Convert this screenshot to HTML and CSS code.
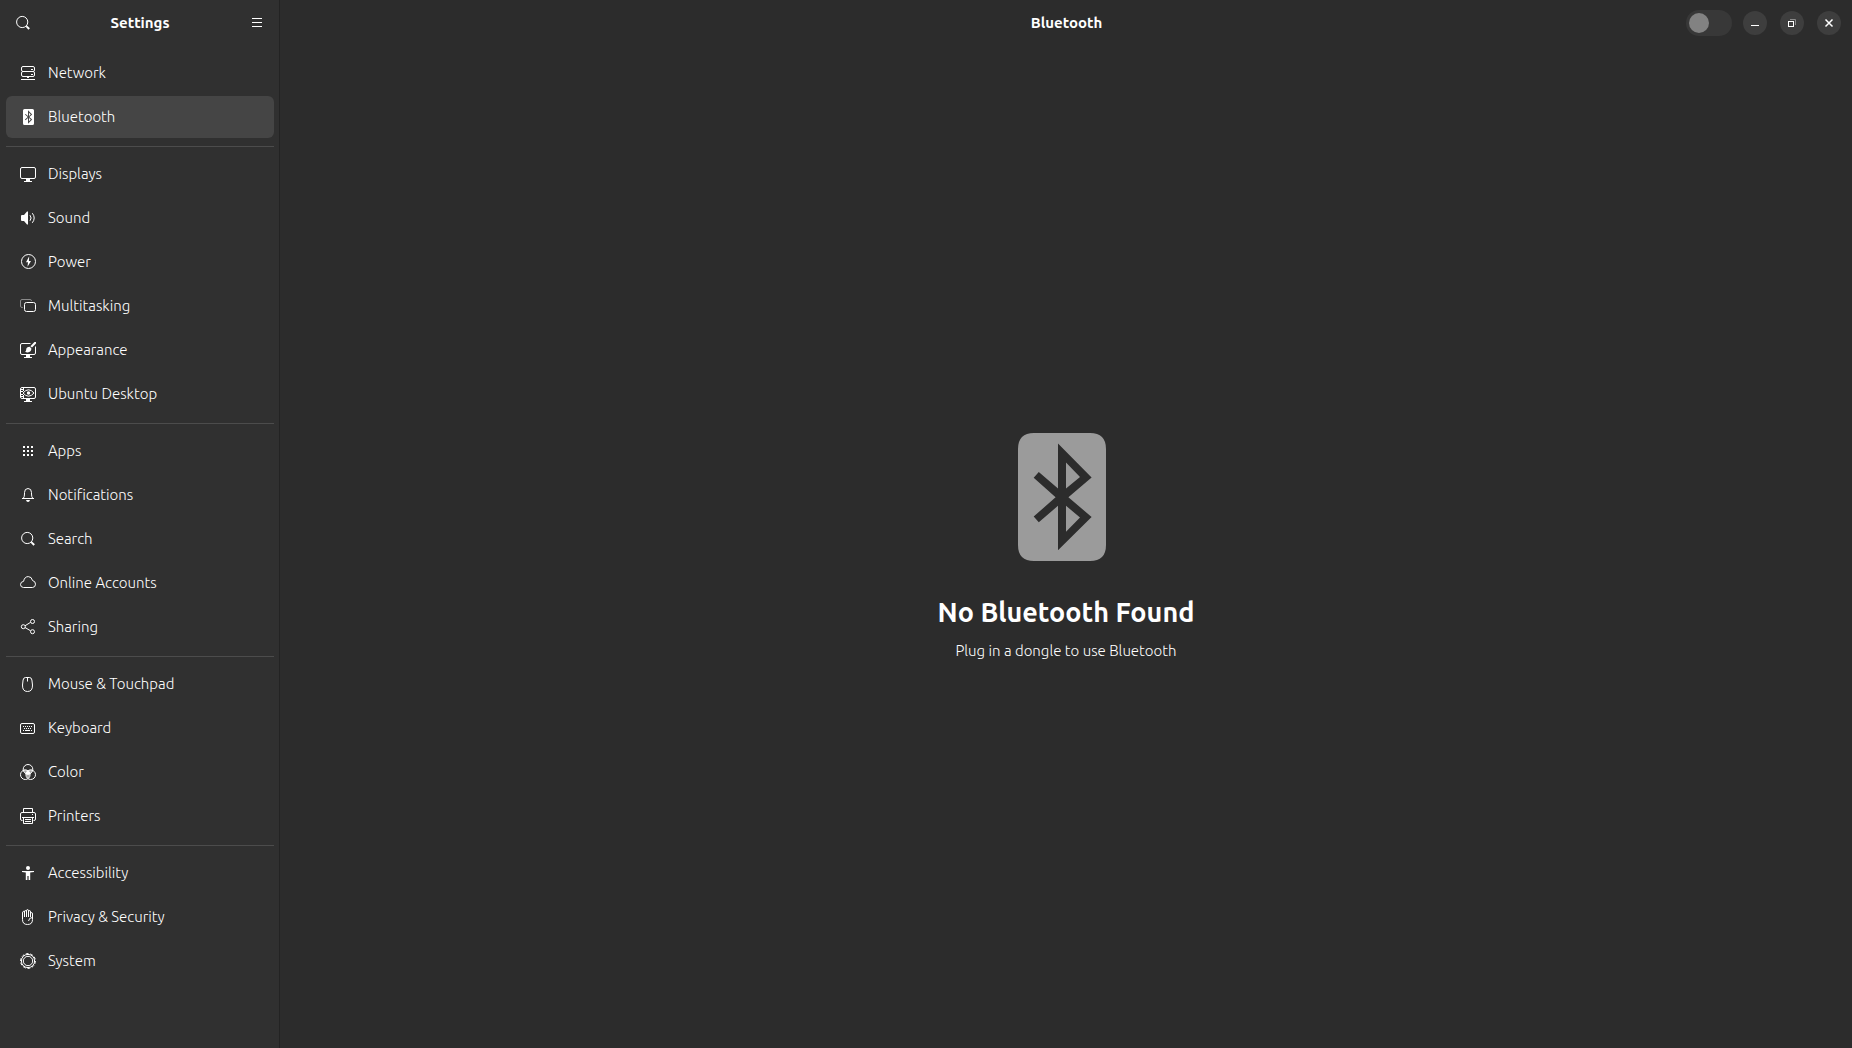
FILE: index.html
```html
<!DOCTYPE html>
<html lang="en">
<head>
<meta charset="utf-8">
<title>Settings</title>
<link rel="stylesheet" href="styles.css">
</head>
<body>
<div class="window">
  <aside class="sidebar">
    <header class="bar">
      <button class="flat" type="button" aria-label="Search settings">
        <svg class="icon" viewBox="0 0 16 16"><circle class="line" cx="7.2" cy="7" r="5.6"/><path class="line thick" d="M11.3 11.1 14.2 14"/></svg>
      </button>
      <h2 class="title">Settings</h2>
      <button class="flat" type="button" aria-label="Main menu">
        <svg class="icon" viewBox="0 0 16 16"><path d="M3 3h10v1H3zM3 7h10v1H3zM3 11h10v1H3z"/></svg>
      </button>
    </header>
    <nav class="panels" aria-label="Settings panels">
      <ul class="group">
        <li><a class="row" href="#network"><svg class="icon" viewBox="0 0 16 16"><rect class="line" x="1.5" y="1.5" width="13" height="5" rx="1.5"/><rect class="line" x="1.5" y="6.5" width="13" height="5" rx="1.5"/><path d="M11 4h2v1h-2zM11 9h2v1h-2zM7 12h2v1H7zM1 14h14v1H1z"/></svg>Network</a></li>
        <li><a class="row selected" href="#bluetooth" aria-current="page"><svg class="icon" viewBox="-1 0 16 16"><path fill-rule="evenodd" d="M3.5 0h8q1.500 0 1.500 1.500v13q0 1.500-1.500 1.500h-8Q2 16 2 14.500v-13Q2 0 3.500 0zM7 1.300V6.950L4.600 4.900 3.960 5.600 6.700 8.030 3.960 10.450 4.600 11.150 7 9.100v5.570L11.200 10.500 8.300 8.030 11.200 5.550zM8 3.700 9.750 5.500 8 6.950zM8 9.100 9.750 10.550 8 12.350z"/></svg>Bluetooth</a></li>
      </ul>
      <hr class="divider">
      <ul class="group">
        <li><a class="row" href="#displays"><svg class="icon" viewBox="0 0 16 16"><rect class="line" x=".5" y="1.5" width="15" height="11" rx="1.5"/><path d="M6 13h4v2h2v1H4v-1h2z"/></svg>Displays</a></li>
        <li><a class="row" href="#sound"><svg class="icon" viewBox="0 0 16 16"><path d="M2 5h2l3-3.400h1v12.800H7L4 11H2q-1 0-1-1V6q0-1 1-1z"/><path class="line" d="M10 5.200q2.200 2.800 0 5.600M12.300 3.200q3.800 4.800 0 9.600"/></svg>Sound</a></li>
        <li><a class="row" href="#power"><svg class="icon" viewBox="0 0 16 16"><circle class="line" cx="8.500" cy="7.500" r="7"/><path d="M9.200 2.300 6 8.300h2l-.5 4.400L11 6.900H8.900z"/></svg>Power</a></li>
        <li><a class="row" href="#multitasking"><svg class="icon" viewBox="0 0 16 16"><path class="line dim" d="M2.800 9.500H2Q.5 9.500.5 8V3Q.5 1.500 2 1.500h8q1.500 0 1.500 1.500"/><rect class="line" x="4.500" y="4.500" width="11" height="9" rx="2"/></svg>Multitasking</a></li>
        <li><a class="row" href="#appearance"><svg class="icon" viewBox="0 0 16 16"><path class="line" d="M10.500 1.500H2Q.5 1.500.5 3v8q0 1.500 1.500 1.500h12q1.500 0 1.500-1.500V4.500"/><path d="M6 13h4v2h2v1H4v-1h2zM16 0v1.500L12 5.600 10.400 4.200 14.200.2q.8-.6 1.800-.2zM9.700 4.800l1.700 1.600Q11.300 9.500 8.500 10.300q-1.800.4-3.300-.5 1-.6 1-2.200Q6.400 4.800 9.700 4.800z"/></svg>Appearance</a></li>
        <li><a class="row" href="#ubuntu"><svg class="icon" viewBox="0 0 16 16"><rect class="line" x=".5" y="1.500" width="15" height="11" rx="1.500"/><path d="M6 13h4v2h2v1H4v-1h2zM0 3h3v1H0zM0 5h3v1H0zM0 8h3v1H0zM0 10h3v1H0zM3 2h1v3H3zM3 9h1v3H3z"/><path class="line" d="M3 7q5.500-6.400 11 0-5.500 6.400-11 0z"/><circle cx="8.500" cy="7" r="1.700"/></svg>Ubuntu Desktop</a></li>
      </ul>
      <hr class="divider">
      <ul class="group">
        <li><a class="row" href="#apps"><svg class="icon" viewBox="0 0 16 16"><path d="M3 3h2v2H3zM7 3h2v2H7zM11 3h2v2h-2zM3 7h2v2H3zM7 7h2v2H7zM11 7h2v2h-2zM3 11h2v2H3zM7 11h2v2H7zM11 11h2v2h-2z"/></svg>Apps</a></li>
        <li><a class="row" href="#notifications"><svg class="icon" viewBox="0 0 16 16"><path class="line" d="M2 11.500h12M3.200 11.500Q4.500 10 4.500 7V5.500Q4.500 1.500 8 1.500t3.500 4V7q0 3 1.300 4.500"/><path d="M6 13h4q-.5 2-2 2t-2-2z"/></svg>Notifications</a></li>
        <li><a class="row" href="#search"><svg class="icon" viewBox="0 0 16 16"><circle class="line" cx="7.200" cy="7" r="5.600"/><path class="line thick" d="M11.300 11.100 14.200 14"/></svg>Search</a></li>
        <li><a class="row" href="#accounts"><svg class="icon" viewBox="0 0 16 16"><path class="line" d="M3.500 12.500Q.5 12.300.5 9.500.6 6.700 3.600 6.300 4.500 1.600 8.300 1.600q3.400 0 4.200 3.900 3 .7 3 3.700 0 3.100-3 3.300z"/></svg>Online Accounts</a></li>
        <li><a class="row" href="#sharing"><svg class="icon" viewBox="0 0 16 16"><path class="line" d="M5 6.800l5.600-3.500M5 8.500l5.600 3.300"/><circle class="line" cx="12.500" cy="2.500" r="2"/><circle class="line" cx="3.300" cy="7.700" r="2"/><circle class="line" cx="12.500" cy="12.700" r="2"/></svg>Sharing</a></li>
      </ul>
      <hr class="divider">
      <ul class="group">
        <li><a class="row" href="#mouse"><svg class="icon" viewBox="0 0 16 16"><path class="line" d="M5.500 1.500h4q2 0 2.400 2.500l.6 5q.2 6.500-5 6.500t-5-6.500l.6-5Q3.500 1.500 5.500 1.500zM7.500 1.500v4"/></svg>Mouse &amp; Touchpad</a></li>
        <li><a class="row" href="#keyboard"><svg class="icon" viewBox="0 0 16 16"><rect class="line" x=".5" y="3.500" width="14" height="10" rx="1.500"/><path d="M3 6h1v1H3zM5 6h1v1H5zM7 6h1v1H7zM9 6h1v1H9zM11 6h1v1h-1zM4 8h1v1H4zM6 8h1v1H6zM8 8h1v1H8zM10 8h1v1h-1zM3 10h1v1H3zM5 10h5v1H5zM11 10h1v1h-1z"/></svg>Keyboard</a></li>
        <li><a class="row" href="#color"><svg class="icon" viewBox="0 0 16 16"><path class="half" d="M3 5.800Q5.500 5 8 6.800 10.500 5 13 5.800q-.6 3.300-3 4.300-.3 3-2 4.400-1.700-1.400-2-4.400-2.400-1-3-4.300z"/><path d="M8 6.600q2 1.200 2.400 3.500-2.400 1.300-4.800 0Q6 7.800 8 6.600z"/><circle class="line" cx="8" cy="5.300" r="4.800"/><circle class="line" cx="5.300" cy="10.700" r="4.800"/><circle class="line" cx="10.700" cy="10.700" r="4.800"/></svg>Color</a></li>
        <li><a class="row" href="#printers"><svg class="icon" viewBox="0 0 16 16"><path class="line" d="M3.500 4V.5h9V4M2.500 12.500H2Q.5 12.500.5 11V6q0-1.500 1.500-1.500h12q1.500 0 1.500 1.500v5q0 1.500-1.500 1.500h-.5M3.500 10v5.500h9V10"/><path d="M2 9h12v1H2zM5 11h6v1H5zM5 13h6v1H5zM12 6h1v1h-1z"/></svg>Printers</a></li>
      </ul>
      <hr class="divider">
      <ul class="group">
        <li><a class="row" href="#accessibility"><svg class="icon" viewBox="0 0 16 16"><circle cx="8" cy="3" r="2"/><path d="M2 6h12v1l-3.800.6V15H8.600v-4H7.400v4H5.800V7.600L2 7z"/></svg>Accessibility</a></li>
        <li><a class="row" href="#privacy"><svg class="icon" viewBox="0 0 16 16"><path class="line" d="M4.500 8V3q0-1.500-1-.8T2.500 4v6.500q0 5 5 5t5-5V5q0-1.500-1-1.500t-1 1.500v3M4.500 3q0-1.500 1-1.500t1 1.500M6.500 8V2q0-1.500 1-1.500t1 1.500v6M8.500 3q0-1.500 1-1.500t1 1.500v2M12.500 8.500q-3.500 0-4 3.500"/></svg>Privacy &amp; Security</a></li>
        <li><a class="row" href="#system"><svg class="icon" viewBox="0 0 16 16"><circle class="line" cx="8" cy="8" r="4.700"/><circle class="line" cx="8" cy="8" r="6.600"/><circle class="teeth" cx="8" cy="8" r="7.400" pathLength="80"/></svg>System</a></li>
      </ul>
    </nav>
  </aside>
  <main class="content">
    <header class="bar">
      <h1 class="title">Bluetooth</h1>
      <div class="controls">
        <input class="switch" type="checkbox" role="switch" aria-label="Bluetooth" disabled>
        <div class="window-buttons">
          <button class="round" type="button" aria-label="Minimize"><svg class="icon" viewBox="0 0 16 16"><path d="M4 10h8v1H4z"/></svg></button>
          <button class="round" type="button" aria-label="Restore"><svg class="icon" viewBox="0 0 16 16"><path class="line dim" d="M6 4.500h5.500V10"/><rect class="line" x="4.500" y="6.500" width="5" height="5"/></svg></button>
          <button class="round" type="button" aria-label="Close"><svg class="icon" viewBox="0 0 16 16"><path class="line cross" d="M4.500 4.500l7 7M11.500 4.500l-7 7"/></svg></button>
        </div>
      </div>
    </header>
    <section class="status">
      <svg class="status-icon" viewBox="0 0 16 16" aria-hidden="true"><path fill-rule="evenodd" d="M4 0h7Q13 0 13 2v12q0 2-2 2H4q-2 0-2-2V2q0-2 2-2zM7 1.300V6.950L4.600 4.880 3.960 5.600 6.700 8.030 3.960 10.450 4.600 11.150 7 9.100v5.570L11.200 10.500 8.300 8.030 11.200 5.550zM8 3.700 9.750 5.500 8 6.950zM8 9.100 9.750 10.550 8 12.350z"/></svg>
      <h2 class="status-title">No Bluetooth Found</h2>
      <p class="status-text">Plug in a dongle to use Bluetooth</p>
    </section>
  </main>
</div>
</body>
</html>
```
FILE: styles.css
```css
* {
  box-sizing: border-box;
}

body {
  margin: 0;
  background: #2c2c2c;
  color: #fff;
  font: 300 15px/20px Ubuntu, "Noto Sans", sans-serif;
}

.window {
  display: grid;
  grid-template-columns: 280px 1fr;
  min-height: 100vh;
}

.sidebar {
  background: #303030;
  border-right: 1px solid #232323;
}

.content {
  display: flex;
  flex-direction: column;
}

/* Header bars */
.bar {
  position: relative;
  display: flex;
  align-items: center;
  justify-content: center;
  height: 46px;
  padding: 0 5px 0 6px;
}

.title {
  flex: 1;
  margin: 0;
  color: #fff;
  font-size: 15px;
  font-weight: 700;
  text-align: center;
}

.controls {
  position: absolute;
  right: 11px;
  display: flex;
  align-items: center;
  gap: 11px;
}

.window-buttons {
  display: flex;
  gap: 13px;
}

.flat,
.round {
  display: grid;
  place-items: center;
  padding: 0;
  border: 0;
  background: none;
}

.flat {
  width: 34px;
  height: 34px;
  border-radius: 6px;
}

.round {
  width: 24px;
  height: 24px;
  border-radius: 50%;
  background: #3e3e3e;
}

.switch {
  appearance: none;
  width: 46px;
  height: 26px;
  margin: 0;
  padding: 3px;
  border-radius: 13px;
  background: #383838;
}

.switch::before {
  content: "";
  display: block;
  width: 20px;
  height: 20px;
  border-radius: 50%;
  background: #828282;
}

.switch:checked::before {
  margin-left: auto;
}

/* Panel list */
.panels {
  padding: 6px 5px 6px 6px;
}

.group {
  display: flex;
  flex-direction: column;
  gap: 2px;
  margin: 0;
  padding: 0;
  list-style: none;
}

.row {
  display: flex;
  align-items: center;
  gap: 12px;
  height: 42px;
  padding: 0 14px;
  border-radius: 6px;
  color: inherit;
  text-decoration: none;
}

.row.selected {
  background: #454545;
}

.divider {
  height: 1px;
  margin: 8px 0 6px;
  border: 0;
  background: #4c4c4c;
}

/* Symbolic icons */
.icon {
  display: block;
  flex: none;
  width: 16px;
  height: 16px;
  fill: #fff;
}

.line {
  fill: none;
  stroke: #fff;
  stroke-width: 1;
}

.thick {
  stroke-width: 2;
}

.cross {
  stroke-width: 1.5;
}

.dim {
  stroke: #8a8a8a;
}

.half {
  fill: #a8a8a8;
}

.teeth {
  fill: none;
  stroke: #fff;
  stroke-width: 1;
  stroke-dasharray: 5 3;
}

/* Empty state */
.status {
  display: flex;
  flex: 1;
  flex-direction: column;
  align-items: center;
  justify-content: center;
}

.status-icon {
  width: 128px;
  height: 128px;
  fill: #9b9b9b;
}

.status-title {
  margin: 34px 0 12px;
  color: #fff;
  font-size: 27px;
  line-height: 34px;
  font-weight: 700;
}

.status-text {
  margin: 0;
}
```
